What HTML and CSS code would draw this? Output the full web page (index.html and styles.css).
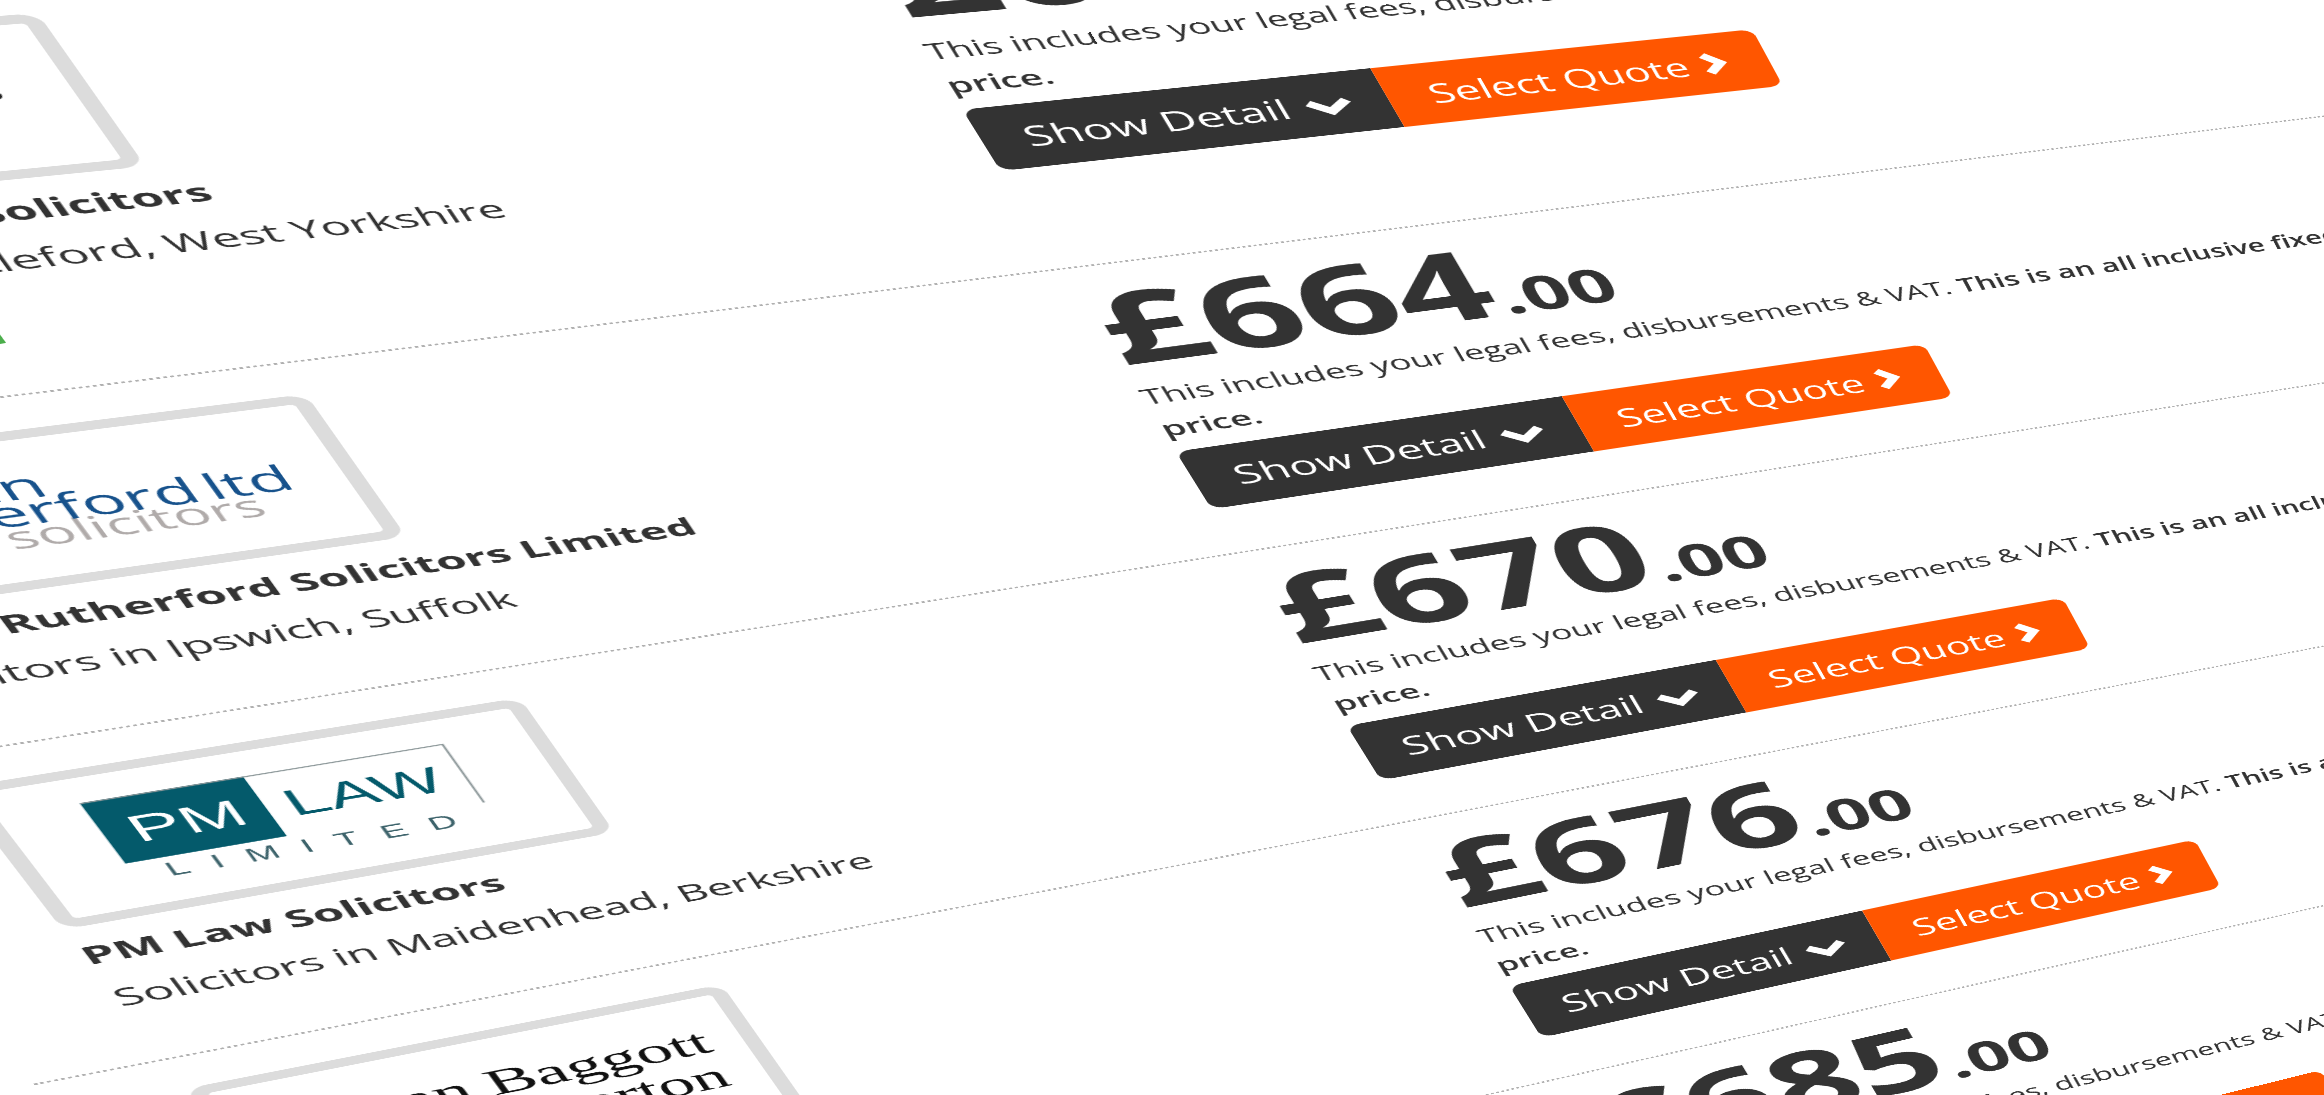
FILE: index.html
```html
<!DOCTYPE html>
<html lang="en">
<head>
<meta charset="utf-8">
<meta name="viewport" content="width=device-width, initial-scale=1">
<title>Conveyancing Quotes</title>
<link rel="stylesheet" href="styles.css">
</head>
<body>
<svg width="0" height="0" class="defs" aria-hidden="true">
  <symbol id="down" viewBox="0 0 52 36"><path d="M5 7 L26 26 L47 7" fill="none" stroke="#fff" stroke-width="12"/></symbol>
  <symbol id="right" viewBox="0 0 34 46"><path d="M7 5 L24 23 L7 41" fill="none" stroke="#fff" stroke-width="12"/></symbol>
</svg>
<main class="scene">
  <ul class="quotes">
    <li class="quote quote-featured">
      <section class="firm">
        <div class="logo">
          <svg class="logo-art" viewBox="0 0 470 234" role="img" aria-label="Firm logo">
            <text x="414" y="119" text-anchor="end" class="logo-script">Partners</text>
          </svg>
        </div>
        <h2 class="name">Harper &amp; Lewis Solicitors</h2>
        <p class="place">Solicitors in Castleford, West Yorkshire</p>
        <span class="flag"></span>
      </section>
      <section class="offer">
        <p class="price">£652<span class="pence">.00</span></p>
        <p class="note">This includes your legal fees, disbursements &amp; VAT. <strong>This is an all inclusive fixed price.</strong></p>
        <div class="actions">
          <button class="btn btn-detail" type="button">Show Detail <svg class="ico-down" aria-hidden="true"><use href="#down"/></svg></button>
          <button class="btn btn-select" type="button">Select Quote <svg class="ico-right" aria-hidden="true"><use href="#right"/></svg></button>
        </div>
      </section>
    </li>
    <li class="quote">
      <section class="firm">
        <div class="logo">
          <svg class="logo-art" viewBox="0 0 470 234" role="img" aria-label="Brian Rutherford Ltd Solicitors">
            <text x="386" y="180" text-anchor="end" class="logo-grey">solicitors</text>
            <text x="225" y="99" text-anchor="end" class="logo-blue">brian</text>
            <text x="424" y="142" text-anchor="end" class="logo-blue">rutherford<tspan dx="8">ltd</tspan></text>
          </svg>
        </div>
        <h2 class="name">Brian Rutherford Solicitors Limited</h2>
        <p class="place">Solicitors in Ipswich, Suffolk</p>
      </section>
      <section class="offer">
        <p class="price">£664<span class="pence">.00</span></p>
        <p class="note">This includes your legal fees, disbursements &amp; VAT. <strong>This is an all inclusive fixed price.</strong></p>
        <div class="actions">
          <button class="btn btn-detail" type="button">Show Detail <svg class="ico-down" aria-hidden="true"><use href="#down"/></svg></button>
          <button class="btn btn-select" type="button">Select Quote <svg class="ico-right" aria-hidden="true"><use href="#right"/></svg></button>
        </div>
      </section>
    </li>
    <li class="quote">
      <section class="firm">
        <div class="logo">
          <svg class="logo-art" viewBox="0 0 470 234" role="img" aria-label="PM Law Limited">
            <rect x="71" y="43" width="142" height="114" fill="#045a6b"/>
            <path d="M71 44 H393 V157" fill="none" stroke="#8b9698" stroke-width="2"/>
            <text x="94" y="125" class="logo-pm">PM</text>
            <text x="231" y="125" class="logo-law">LAW</text>
            <text x="99" y="191" class="logo-limited">LIMITED</text>
          </svg>
        </div>
        <h2 class="name">PM Law Solicitors</h2>
        <p class="place">Solicitors in Maidenhead, Berkshire</p>
      </section>
      <section class="offer">
        <p class="price">£670<span class="pence">.00</span></p>
        <p class="note">This includes your legal fees, disbursements &amp; VAT. <strong>This is an all inclusive fixed price.</strong></p>
        <div class="actions">
          <button class="btn btn-detail" type="button">Show Detail <svg class="ico-down" aria-hidden="true"><use href="#down"/></svg></button>
          <button class="btn btn-select" type="button">Select Quote <svg class="ico-right" aria-hidden="true"><use href="#right"/></svg></button>
        </div>
      </section>
    </li>
    <li class="quote">
      <section class="firm">
        <div class="logo">
          <svg class="logo-art" viewBox="0 0 470 234" role="img" aria-label="Bryan Baggott Egerton">
            <text x="439" y="103" text-anchor="end" class="logo-serif">Bryan Baggott</text>
            <text x="434" y="171" text-anchor="end" class="logo-serif">Egerton</text>
          </svg>
        </div>
        <h2 class="name">Bryan Baggott Solicitors</h2>
        <p class="place">Solicitors in London</p>
      </section>
      <section class="offer">
        <p class="price">£676<span class="pence">.00</span></p>
        <p class="note">This includes your legal fees, disbursements &amp; VAT. <strong>This is an all inclusive fixed price.</strong></p>
        <div class="actions">
          <button class="btn btn-detail" type="button">Show Detail <svg class="ico-down" aria-hidden="true"><use href="#down"/></svg></button>
          <button class="btn btn-select" type="button">Select Quote <svg class="ico-right" aria-hidden="true"><use href="#right"/></svg></button>
        </div>
      </section>
    </li>
    <li class="quote">
      <section class="firm"></section>
      <section class="offer">
        <p class="price">£685<span class="pence">.00</span></p>
        <p class="note">This includes your legal fees, disbursements &amp; VAT. <strong>This is an all inclusive fixed price.</strong></p>
        <div class="actions">
          <button class="btn btn-detail" type="button">Show Detail <svg class="ico-down" aria-hidden="true"><use href="#down"/></svg></button>
          <button class="btn btn-select" type="button">Select Quote <svg class="ico-right" aria-hidden="true"><use href="#right"/></svg></button>
        </div>
      </section>
    </li>
  </ul>
</main>
</body>
</html>
```
FILE: styles.css
```css
* {
  box-sizing: border-box;
}

body {
  margin: 0;
  background: #fff;
  color: #333;
  font-family: "Open Sans", "Noto Sans", sans-serif;
}

.defs {
  display: block;
}

/* the quote list lies on a plane tilted away from the viewer */
.scene {
  width: 100%;
  height: 100vh;
  overflow: hidden;
}

.quotes {
  width: 3200px;
  margin: 0;
  padding: 0;
  list-style: none;
  transform-origin: 0 0;
  transform: matrix3d(
    1.309199, -0.10547, 0, 0.0001330785,
    0.452318, 0.640025, 0, 0.00005911971,
    0, 0, 1, 0,
    -780.137, 42.86, 0, 1);
}

.quote {
  display: grid;
  grid-template-columns: 1244px 1540px;
  min-height: 570px;
  padding-left: 110px;
  border-bottom: 3px dotted #b0b0b0;
}

.quote-featured {
  min-height: 670px;
}

.firm {
  padding-top: 55px;
}

.logo {
  width: 498px;
  height: 264px;
  border: 15px solid #dcdcdc;
  border-radius: 20px;
}

.logo-art {
  display: block;
  width: 100%;
  height: 100%;
}

.name {
  margin: 17px 0 0;
  font-size: 43px;
  line-height: 68px;
  font-weight: 700;
}

.place {
  margin: 0;
  font-size: 43px;
  line-height: 92px;
}

.flag {
  display: block;
  width: 290px;
  height: 56px;
  margin-top: 30px;
  background: #4cae4c;
}

.offer {
  padding-top: 28px;
}

.price {
  margin: 0;
  font-size: 186px;
  line-height: 180px;
  font-weight: 700;
}

.pence {
  margin-left: 4px;
  font-size: 94px;
  line-height: 90px;
}

.note {
  margin: 13px 0 0;
  font-size: 40px;
  line-height: 64px;
}

.note strong {
  font-weight: 600;
}

.actions {
  display: flex;
  margin-top: 13px;
}

.btn {
  display: flex;
  align-items: center;
  height: 117px;
  margin: 0;
  border: 0;
  color: #fff;
  font-family: inherit;
  font-size: 51px;
  line-height: 68px;
}

.btn-detail {
  width: 435px;
  padding: 0 0 0 44px;
  gap: 18px;
  border-radius: 15px 0 0 15px;
  background: #333;
}

.btn-select {
  width: 447px;
  padding: 0 0 0 47px;
  gap: 16px;
  border-radius: 0 15px 15px 0;
  background: #ff5600;
}

.ico-down {
  width: 52px;
  height: 36px;
  margin-top: 12px;
}

.ico-right {
  width: 34px;
  height: 46px;
}

.logo-script {
  font: italic bold 52px "Liberation Serif", serif;
  fill: #222;
}

.logo-blue {
  font-size: 61px;
  fill: #17528c;
}

.logo-grey {
  font-size: 53px;
  fill: #b0abaa;
}

.logo-pm {
  font: 66px "Liberation Sans", sans-serif;
  fill: #fff;
}

.logo-law {
  font: 66px "Liberation Sans", sans-serif;
  fill: #045a6b;
}

.logo-limited {
  font: 34px "Liberation Sans", sans-serif;
  letter-spacing: 21px;
  fill: #3d636b;
}

.logo-serif {
  font: 67px "Liberation Serif", serif;
  fill: #111;
}
```
